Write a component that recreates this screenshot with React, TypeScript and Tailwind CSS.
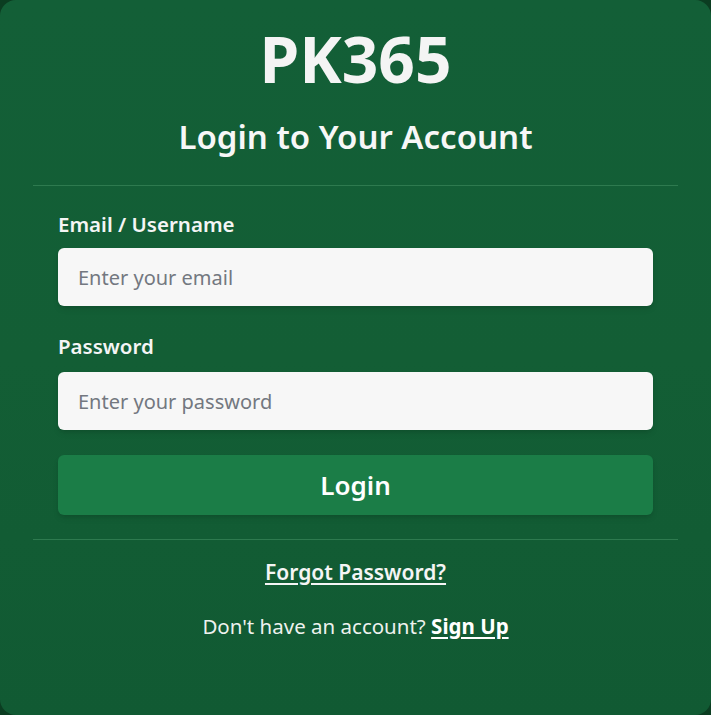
export default function App() {
  return (
    <div className="min-h-[715px] w-full bg-[#0b3d21] font-['Noto_Sans',sans-serif]">
      <div className="flex h-[715px] w-full flex-col items-center rounded-2xl bg-gradient-to-b from-[#135f37] via-[#135e35] to-[#115a33] px-[33px]">
        <h1 className="mt-[27px] text-[64px] font-bold leading-[64px] text-[#f4f4f4]">PK365</h1>
        <h2 className="mt-[26px] text-[33px] font-semibold leading-[40px] text-[#f7f7f7]">Login to Your Account</h2>
        <div className="mt-[28px] h-px w-full bg-[#2e7a4f]" />

        <form className="flex w-full flex-col px-[25px]">
          <label className="mt-[26px] text-[20.5px] font-semibold leading-[24px] text-[#f5f5f5]">Email / Username</label>
          <input
            type="text"
            placeholder="Enter your email"
            className="mt-[12px] h-[58px] w-full rounded-md bg-[#f7f7f7] px-[20px] text-[20px] text-gray-700 shadow-md outline-none placeholder:text-[#737880]"
          />
          <label className="mt-[28px] text-[20.5px] font-semibold leading-[24px] text-[#f5f5f5]">Password</label>
          <input
            type="password"
            placeholder="Enter your password"
            className="mt-[14px] h-[58px] w-full rounded-md bg-[#f7f7f7] px-[20px] text-[20px] text-gray-700 shadow-md outline-none placeholder:text-[#737880]"
          />
          <button
            type="button"
            className="mt-[25px] h-[60px] w-full rounded-md bg-[#1b7d47] text-[26px] font-semibold text-white shadow-md"
          >
            Login
          </button>
        </form>

        <div className="mt-[24px] h-px w-full bg-[#2e7a4f]" />
        <a href="#" className="mt-[20px] text-[21px] font-semibold leading-[24px] text-[#f5f5f5] underline underline-offset-[3px]">
          Forgot Password?
        </a>
        <p className="mt-[30px] text-[20.5px] leading-[24px] text-[#eef2ee]">
          Don't have an account?{" "}
          <a href="#" className="font-bold text-white underline underline-offset-[3px]">Sign Up</a>
        </p>
      </div>
    </div>
  );
}
